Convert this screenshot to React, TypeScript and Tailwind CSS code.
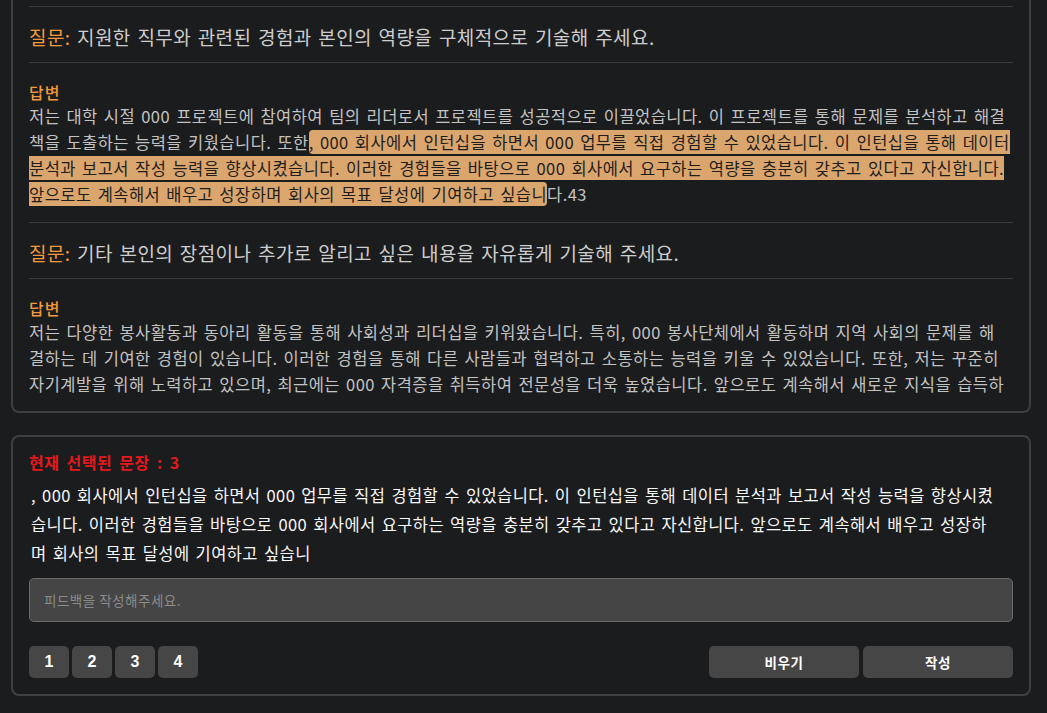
import React from 'react'

const kr = { fontFamily: '"Noto Sans CJK KR", "Noto Sans", sans-serif' }

function Question({ text }: { text: string }) {
  return (
    <div className="pt-[16px] pb-[11px] text-[19px] leading-[28px] tracking-[0.4px] [word-spacing:2px] text-[#cdcdcd]">
      <span className="text-[#f09a3e]">질문:</span> {text}
    </div>
  )
}

function Divider() {
  return <div className="h-px bg-[#3a3b3d]" />
}

function AnswerLabel() {
  return <p className="text-[16px] leading-[22px] tracking-[1px] font-medium text-[#f09a3e]">답변</p>
}

export default function App() {
  return (
    <div className="min-h-screen bg-[#1b1c1e] pl-[11px] pr-[16px]" style={kr}>
      {/* 자소서 패널 (스크롤된 상태) */}
      <div className="w-[1020px] border-x-2 border-b-2 border-[#3f4042] rounded-b-[8px] px-4 pb-[12px]">
        <div className="h-[399px] overflow-hidden pt-[6px]">
          <Divider />
          <Question text="지원한 직무와 관련된 경험과 본인의 역량을 구체적으로 기술해 주세요." />
          <Divider />
          <div className="pt-[18px] pb-[15px]">
            <AnswerLabel />
            <p className="text-[16.5px] leading-[26px] tracking-[0.45px] [word-spacing:2px] text-[#c3c3c3] whitespace-nowrap">
              저는 대학 시절 000 프로젝트에 참여하여 팀의 리더로서 프로젝트를 성공적으로 이끌었습니다. 이 프로젝트를 통해 문제를 분석하고 해결
              <br />
              책을 도출하는 능력을 키웠습니다. 또한
              <span className="bg-[#dba56e] text-[#1e1e1e] rounded-[4px]">
                , 000 회사에서 인턴십을 하면서 000 업무를 직접 경험할 수 있었습니다. 이 인턴십을 통해 데이터
                <br />
                분석과 보고서 작성 능력을 향상시켰습니다. 이러한 경험들을 바탕으로 000 회사에서 요구하는 역량을 충분히 갖추고 있다고 자신합니다.
                <br />
                앞으로도 계속해서 배우고 성장하며 회사의 목표 달성에 기여하고 싶습니
              </span>
              다.43
            </p>
          </div>
          <Divider />
          <Question text="기타 본인의 장점이나 추가로 알리고 싶은 내용을 자유롭게 기술해 주세요." />
          <Divider />
          <div className="pt-[18px]">
            <AnswerLabel />
            <p className="text-[16.5px] leading-[26px] tracking-[0.45px] [word-spacing:2px] text-[#c3c3c3] whitespace-nowrap">
              저는 다양한 봉사활동과 동아리 활동을 통해 사회성과 리더십을 키워왔습니다. 특히, 000 봉사단체에서 활동하며 지역 사회의 문제를 해
              <br />
              결하는 데 기여한 경험이 있습니다. 이러한 경험을 통해 다른 사람들과 협력하고 소통하는 능력을 키울 수 있었습니다. 또한, 저는 꾸준히
              <br />
              자기계발을 위해 노력하고 있으며, 최근에는 000 자격증을 취득하여 전문성을 더욱 높였습니다. 앞으로도 계속해서 새로운 지식을 습득하
            </p>
          </div>
        </div>
      </div>

      {/* 선택 문장 + 피드백 */}
      <div className="mt-[22px] w-[1020px] border-2 border-[#3f4042] rounded-[8px] px-4 pt-[14px] pb-[16px]">
        <p className="text-[16px] leading-[22px] tracking-[0.5px] [word-spacing:3px] font-bold text-[#e3191c]">현재 선택된 문장 : 3</p>
        <p className="mt-2 px-[2px] text-[16.5px] leading-[29px] tracking-[0.4px] [word-spacing:2px] text-[#f7f7f7] whitespace-nowrap">
          , 000 회사에서 인턴십을 하면서 000 업무를 직접 경험할 수 있었습니다. 이 인턴십을 통해 데이터 분석과 보고서 작성 능력을 향상시켰
          <br />
          습니다. 이러한 경험들을 바탕으로 000 회사에서 요구하는 역량을 충분히 갖추고 있다고 자신합니다. 앞으로도 계속해서 배우고 성장하
          <br />
          며 회사의 목표 달성에 기여하고 싶습니
        </p>
        <input
          className="mt-[10px] block w-full h-[44px] rounded-[5px] border border-[#6a6a6a] bg-[#454545] px-[14px] text-[13.5px] tracking-[0.5px] text-white placeholder:text-[#8b8b8b] outline-none"
          placeholder="피드백을 작성해주세요."
        />
        <div className="mt-[24px] flex items-center justify-between">
          <div className="flex gap-[3px]">
            {['1', '2', '3', '4'].map(n => (
              <button
                key={n}
                className="w-[40px] h-[32px] rounded-[5px] bg-[#464646] text-white text-[16px] font-bold"
                style={{ fontFamily: '"Liberation Sans", Arial, sans-serif' }}
              >
                {n}
              </button>
            ))}
          </div>
          <div className="flex gap-[4px]">
            <button className="w-[150px] h-[32px] rounded-[5px] bg-[#464646] text-white text-[13.5px] tracking-[0.5px] font-bold">비우기</button>
            <button className="w-[150px] h-[32px] rounded-[5px] bg-[#464646] text-white text-[13.5px] tracking-[0.5px] font-bold">작성</button>
          </div>
        </div>
      </div>
      <div className="h-[17px]" />
    </div>
  )
}
